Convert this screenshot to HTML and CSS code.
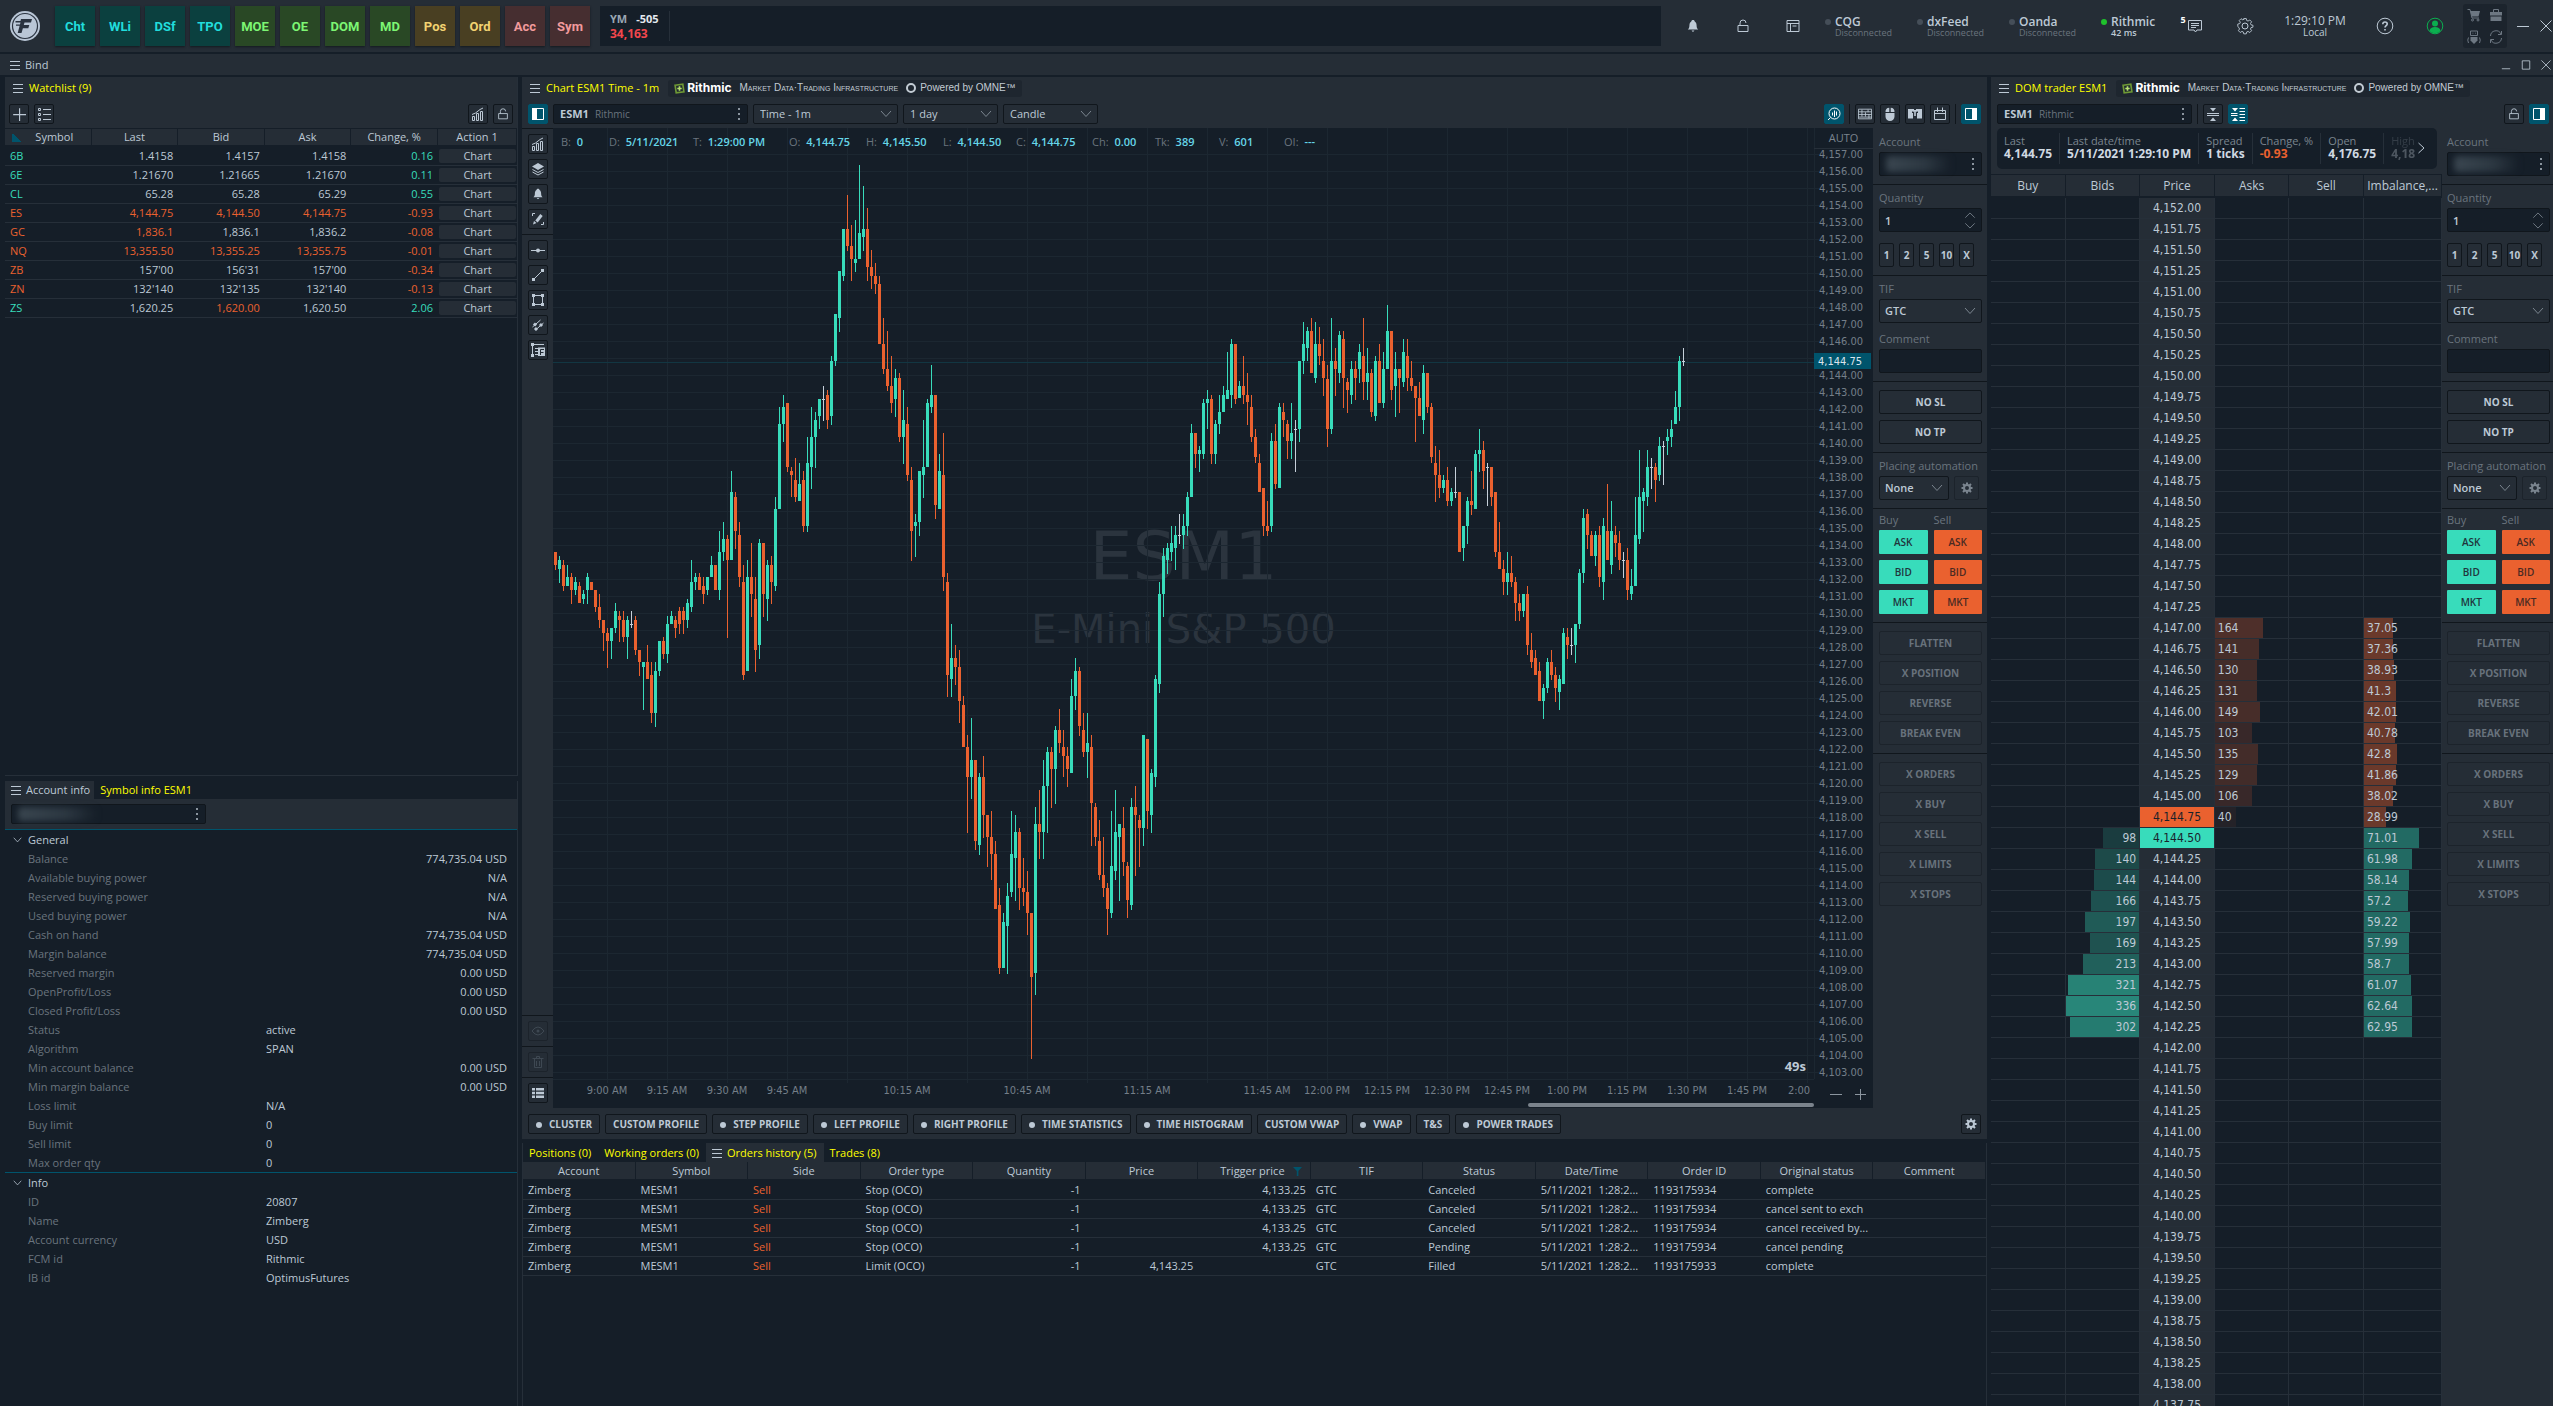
FILE: index.html
```html
<!DOCTYPE html>
<html lang="en">
<head>
  <meta charset="UTF-8">
  <title>Trading workspace</title>
  <meta name="viewport" content="width=device-width, initial-scale=1.0">
  <link rel="stylesheet" href="styles.css">
</head>
<body>
  <!-- icon sprite -->
  <svg class="sprite" aria-hidden="true">
    <symbol id="i-menu" viewBox="0 0 10 10"><path d="M0 1.500h10M0 5.500h10M0 9.500h10"/></symbol>
    <symbol id="i-bell" viewBox="0 0 16 16"><path class="fill" d="M8 2c1 0 1.600.600 1.700 1.400 1.300.700 1.900 2.200 1.900 4.200 0 2 .500 3 1.600 4H2.800c1.100-1 1.600-2 1.600-4 0-2 .600-3.500 1.900-4.200C6.400 2.600 7 2 8 2zM6.500 12.500h3L8 14z"/></symbol>
    <symbol id="i-lock" viewBox="0 0 16 16"><path d="M3 7.500h10v6H3zM5 7.500V5a3 3 0 0 1 6 0"/></symbol>
    <symbol id="i-window" viewBox="0 0 16 16"><path d="M2 2.500h12v11H2zM2 5.500h12M5.500 5.500v8M7.500 8h4"/></symbol>
    <symbol id="i-chat" viewBox="0 0 16 16"><path d="M1.500 2.500h13v9.500H10l-1.500 2L7 12H1.500zM4 5.500h8M4 7.500h8M4 9.500h5"/></symbol>
    <symbol id="i-gear" viewBox="0 0 18 18"><path d="M7.600 1.500h2.800l.5 2.200 1.500.600 1.900-1.200 2 2-1.200 1.900.6 1.500 2.200.500v0l-.100 2.100-2.100.500-.600 1.500 1.200 1.900-2 2-1.900-1.200-1.500.600-.500 2.100H7.600l-.5-2.100-1.500-.600-1.900 1.200-2-2 1.200-1.900-.600-1.500L1 10.400V7.600l2.200-.5.600-1.500-1.200-1.900 2-2 1.900 1.200 1.500-.600z" transform="translate(.9 .2) scale(.9)"/><circle cx="9" cy="9" r="3"/></symbol>
    <symbol id="i-cog" viewBox="0 0 12 12"><circle cx="6" cy="6" r="3"/><path d="M6 .5v2M6 9.500v2M.5 6h2M9.500 6h2M2 2l1.500 1.500M8.500 8.500L10 10M10 2L8.500 3.500M3.500 8.500L2 10"/></symbol>
    <symbol id="i-help" viewBox="0 0 18 18"><circle cx="9" cy="9" r="7.800"/><path d="M6.800 7.200c0-3 4.400-2.800 4.400-.2C11.200 8.700 9 8.700 9 10.600M9 12v1.600" stroke-width="1.600"/></symbol>
    <symbol id="i-user" viewBox="0 0 18 18"><circle cx="9" cy="9" r="7.800"/><circle class="fill" cx="9" cy="6.500" r="3"/><path class="fill" d="M3.500 14c.5-3 2.500-4 5.500-4s5 1 5.500 4c-3 3-8 3-11 0z"/></symbol>
    <symbol id="i-cart" viewBox="0 0 14 14"><path class="fill" d="M3.500 3H13l-1.500 5.500H4.500z"/><path d="M.5 1.500h2.500l2 8.500h7"/><circle cx="5.500" cy="12" r="1"/><circle cx="11" cy="12" r="1"/></symbol>
    <symbol id="i-case" viewBox="0 0 14 14"><path class="fill" d="M1 4h12v3.500H1zM1.500 8.500h11V13h-11z"/><path d="M4.500 4V1.500h5V4"/></symbol>
    <symbol id="i-robot" viewBox="0 0 14 14"><path d="M3.500 1h7v4.500h-7zM1.500 7.500Q0 10 1.500 13M12.500 7.500Q14 10 12.500 13M5.500 3.200h.8M8 3.200h.8"/><path class="fill" d="M3.500 7h7v3.500L7 14l-3.500-3.500z"/></symbol>
    <symbol id="i-sync" viewBox="0 0 14 14"><path d="M1.500 6A5.500 5.500 0 0 1 12 4M12.500 1v3.500H9M12.500 8A5.500 5.500 0 0 1 2 10M1.500 13V9.500H5"/></symbol>
    <symbol id="i-min" viewBox="0 0 12 12"><path d="M0 6.500h12"/></symbol>
    <symbol id="i-low" viewBox="0 0 12 12"><path d="M1 10.500h10"/></symbol>
    <symbol id="i-max" viewBox="0 0 12 12"><path d="M1.500 1h9v10h-9z"/></symbol>
    <symbol id="i-x" viewBox="0 0 12 12"><path d="M.5.500l11 11M11.500.500l-11 11"/></symbol>
    <symbol id="i-plus" viewBox="0 0 12 12"><path d="M1 6.500h11M6.500 1v11"/></symbol>
    <symbol id="i-list" viewBox="0 0 14 14"><path d="M1.500 1.500h2v2h-2zM1.500 6.500h2v2h-2zM1.500 11.500h2v2h-2zM6 2.500h8M6 7.500h8M6 12.500h8"/></symbol>
    <symbol id="i-bars" viewBox="0 0 14 14"><path d="M1.500 13.500V9.500h2v4zM5.500 13.500V6.500h2v7zM9.500 13.500V4.500h2v9z"/><path d="M1 7.500L4.500 6 9 2.500l3-1.500"/></symbol>
    <symbol id="i-sideL" viewBox="0 0 14 14"><path class="fill" d="M1 1h5v12H1z"/><path d="M1.500 1.500h11v11h-11z"/></symbol>
    <symbol id="i-sideR" viewBox="0 0 14 14"><path class="fill" d="M8 1h5v12H8z"/><path d="M1.500 1.500h11v11h-11z"/></symbol>
    <symbol id="i-layers" viewBox="0 0 14 14"><path class="fill" d="M7 1l6 3.500L7 8 1 4.500z"/><path d="M1.500 7.500L7 10.500l5.500-3M1.500 10L7 13l5.500-3"/></symbol>
    <symbol id="i-draw" viewBox="0 0 14 14"><path d="M1.500 4V1.500H4M10 12.500h2.500V10"/><path d="M10.500 3L5.500 9.500" stroke-width="3"/><path class="fill" d="M2 12.500l1-3.500 2.500 2z"/></symbol>
    <symbol id="i-hline" viewBox="0 0 14 14"><path d="M0 7.500h14"/><circle class="fill" cx="7" cy="7.500" r="2"/></symbol>
    <symbol id="i-trend" viewBox="0 0 14 14"><path d="M2.500 11.500l9-9"/><path class="fill" d="M1 10h3v3H1zM10 1h3v3h-3z"/></symbol>
    <symbol id="i-rect" viewBox="0 0 14 14"><path d="M2.500 2.500h9v9h-9z"/><path class="fill" d="M1 1h3v3H1zM10 1h3v3h-3zM1 10h3v3H1zM10 10h3v3h-3z"/></symbol>
    <symbol id="i-channel" viewBox="0 0 14 14"><path d="M1.500 9l8-7M4.500 12l8-7"/><path d="M3 7.500l2-2M9 8l2-2M4 12l2-2" stroke-width="3"/></symbol>
    <symbol id="i-fib" viewBox="0 0 14 14"><path d="M1.500 1v12M3 1.500h10M4 5.500h9M4 8.500h3M4 11.500h3"/><path class="fill" d="M0 0h3v3H0zM0 11h3v3H0zM7 4.500h7V13H7z"/><path d="M9.500 12V6.500H13M9.500 9.500h3" stroke="#252d36"/></symbol>
    <symbol id="i-eye" viewBox="0 0 14 14"><path d="M1 7q6-8 12 0-6 8-12 0z"/><circle class="fill" cx="7" cy="7" r="1.500"/></symbol>
    <symbol id="i-trash" viewBox="0 0 14 14"><path d="M1.500 3.500h11M5.500 3.500v-2h3v2M3.500 3.500v9h7v-9M5.500 6v5M8.500 6v5"/></symbol>
    <symbol id="i-rows" viewBox="0 0 14 14"><path class="fill" d="M1 2h3v2.500H1zM5 2h8v2.500H5zM1 5.800h3v2.500H1zM5 5.800h8v2.500H5zM1 9.600h3v2.500H1zM5 9.600h8v2.500H5z"/></symbol>
    <symbol id="i-scan" viewBox="0 0 14 14"><circle cx="7.500" cy="6.500" r="5.500"/><path d="M3.500 10.500L1 13M5.500 8.500v-3M7.500 10V3.500M9.500 8.500v-4"/></symbol>
    <symbol id="i-grid" viewBox="0 0 16 14"><path d="M.5 1.500h15v11H.5zM.5 4.500h15M.5 7.500h15M.5 10.500h15M4.500 2v8M8.500 5v5M11.500 2v3M12.500 7v5"/></symbol>
    <symbol id="i-mouse" viewBox="0 0 14 14"><path class="fill" d="M2.500 6h9v3.500a4.500 4.500 0 0 1-9 0zM2.500 5A4 4 0 0 1 6.300.800V5zM11.500 5A4 4 0 0 0 7.700.800V5z"/></symbol>
    <symbol id="i-ticks" viewBox="0 0 14 14"><path class="fill" d="M0 2h6v2.500H4V6h1v5.500H0zM14 2H8v2.500h2V6H9v5.500h5z"/><path class="fill" d="M5 3h4v1.500H7.800V9H6.200V4.500H5z"/></symbol>
    <symbol id="i-cal" viewBox="0 0 14 14"><path d="M1.500 3.500h11v9h-11zM1.500 6.500h11M4.500.500V5M9.500.500V5"/></symbol>
    <symbol id="i-center" viewBox="0 0 14 14"><path class="fill" d="M4 1h6L7 4.500zM4 14h6l-3-3.500z"/><path d="M1 6.500h12M1 8.500h12"/></symbol>
    <symbol id="i-centerlist" viewBox="0 0 14 14"><path class="fill" d="M1 1h6L4 4.500zM1 14h6l-3-3.500z"/><path d="M0 6.500h6.500M0 8.500h6.500M8.500 1.500H14M8.500 4.500H14M8.500 7.500H14M8.500 10.500H14M8.500 13.500H14"/></symbol>
    <symbol id="i-down" viewBox="0 0 12 8"><path d="M1 1l5 5.500L11 1"/></symbol>
    <symbol id="i-dots" viewBox="0 0 4 12"><path class="fill" d="M1 0h2v2H1zM1 5h2v2H1zM1 10h2v2H1z"/></symbol>
    <symbol id="i-filter" viewBox="0 0 10 12"><path class="fill" d="M0 1h10L6 5.500V11H4.200V5.500z"/></symbol>
    <symbol id="i-next" viewBox="0 0 8 12"><path d="M1.500 1L7 6l-5.500 5"/></symbol>
  </svg>

  <header class="topbar">
    <svg class="logo" viewBox="0 0 30 30"><circle cx="15" cy="15" r="15" fill="#b9c6d6"/><circle cx="15" cy="15" r="12.500" fill="none" stroke="#2a3340" stroke-width="1.200"/><path d="M11 8h11l-1 3.500h-6.500l-.7 2.500h5.500l-1 3.200h-5.400L11.500 22H7.700l2.800-10.500H5.500V10h5zM6 13.500h4v1.200H6z" fill="#2a3340"/></svg>
    <nav class="launchers">
      <button class="launch teal">Cht</button><button class="launch teal">WLi</button><button class="launch teal">DSf</button><button class="launch teal">TPO</button>
      <button class="launch green">MOE</button><button class="launch green">OE</button><button class="launch green">DOM</button><button class="launch green">MD</button>
      <button class="launch gold">Pos</button><button class="launch gold">Ord</button><button class="launch rose">Acc</button><button class="launch rose">Sym</button>
    </nav>
    <div class="ticker">
      <div class="quote"><div><b class="sym">YM</b><b>-505</b></div><div class="fall">34,163</div></div>
    </div>
    <div class="slot"><svg class="ic16"><use href="#i-bell"/></svg></div>
    <div class="slot"><svg class="ic16"><use href="#i-lock"/></svg></div>
    <div class="slot"><svg class="ic16"><use href="#i-window"/></svg></div>
    <div class="conn"><i></i><div>CQG<small>Disconnected</small></div></div>
    <div class="conn"><i></i><div>dxFeed<small>Disconnected</small></div></div>
    <div class="conn"><i></i><div>Oanda<small>Disconnected</small></div></div>
    <div class="conn on"><i></i><div>Rithmic<small>42 ms</small></div></div>
    <div class="slot chat"><sup>5</sup><svg class="ic16"><use href="#i-chat"/></svg></div>
    <div class="slot"><svg class="ic18"><use href="#i-gear"/></svg></div>
    <div class="clock">1:29:10 PM<small>Local</small></div>
    <div class="slot"><svg class="ic18"><use href="#i-help"/></svg></div>
    <div class="slot user"><svg class="ic18"><use href="#i-user"/></svg></div>
    <div class="quick">
      <svg><use href="#i-cart"/></svg><svg><use href="#i-case"/></svg><svg><use href="#i-robot"/></svg><svg><use href="#i-sync"/></svg>
    </div>
    <button class="winbtn" aria-label="Minimize"><svg><use href="#i-min"/></svg></button>
    <button class="winbtn last" aria-label="Close"><svg><use href="#i-x"/></svg></button>
  </header>

  <div class="bindbar">
    <svg class="menu"><use href="#i-menu"/></svg><span>Bind</span>
    <div class="winctl"><svg><use href="#i-low"/></svg><svg><use href="#i-max"/></svg><svg><use href="#i-x"/></svg></div>
  </div>

  <main class="workspace">
    <div class="left">
      <section class="panel watch">
        <div class="tabs"><svg class="menu"><use href="#i-menu"/></svg><span class="title">Watchlist (9)</span></div>
        <div class="toolbar">
          <button class="tool" aria-label="Add"><svg><use href="#i-plus"/></svg></button>
          <button class="tool" aria-label="Lists"><svg><use href="#i-list"/></svg></button>
          <span class="grow"></span>
          <button class="tool" aria-label="Chart"><svg><use href="#i-bars"/></svg></button>
          <button class="tool" aria-label="Lock"><svg><use href="#i-lock"/></svg></button>
        </div>
        <table class="grid watch-table">
          <thead><tr><th class="sorted">Symbol</th><th>Last</th><th>Bid</th><th>Ask</th><th>Change, %</th><th>Action 1</th></tr></thead>
          <tbody id="watchRows"></tbody>
        </table>
      </section>

      <section class="panel account">
        <div class="subtabs"><span class="tab active plain"><svg class="menu"><use href="#i-menu"/></svg>Account info</span><span class="tab">Symbol info ESM1</span></div>
        <div class="toolbar account-bar"><button class="lookup wide" aria-label="Account"><span class="masked"></span><svg class="dots"><use href="#i-dots"/></svg></button></div>
        <div id="accountInfo"></div>
      </section>
    </div>

    <div class="center">
      <section class="panel chart-panel">
        <div class="tabs">
          <svg class="menu"><use href="#i-menu"/></svg><span class="title">Chart ESM1 Time - 1m</span>
          <span class="banner"><svg viewBox="0 0 10 10"><path d="M1 2l7-1 1 7-7 1z" fill="none" stroke="#6f9a35" stroke-width="1.500"/><path d="M3 5h4M5 3v4" stroke="#b6e070" stroke-width="1.500"/></svg><b>Rithmic</b><em>Market Data·Trading Infrastructure</em><i></i><span>Powered by OMNE™</span></span>
        </div>
        <div class="toolbar">
          <button class="tool on" aria-label="Tools panel"><svg><use href="#i-sideL"/></svg></button>
          <button class="lookup sym"><b>ESM1</b> <small>Rithmic</small><svg class="dots"><use href="#i-dots"/></svg></button>
          <label class="select w145"><select aria-label="Aggregation"><option>Time - 1m</option></select><svg><use href="#i-down"/></svg></label>
          <label class="select w95"><select aria-label="Range"><option>1 day</option></select><svg><use href="#i-down"/></svg></label>
          <label class="select w95"><select aria-label="Style"><option>Candle</option></select><svg><use href="#i-down"/></svg></label>
          <span class="grow"></span>
          <button class="tool on" aria-label="Analyze"><svg><use href="#i-scan"/></svg></button>
          <span class="sep"></span>
          <button class="tool" aria-label="Table"><svg><use href="#i-grid"/></svg></button>
          <button class="tool" aria-label="Mouse trading"><svg><use href="#i-mouse"/></svg></button>
          <button class="tool" aria-label="Ticket"><svg><use href="#i-ticks"/></svg></button>
          <button class="tool" aria-label="Calendar"><svg><use href="#i-cal"/></svg></button>
          <span class="sep"></span>
          <button class="tool on" aria-label="Order entry"><svg><use href="#i-sideR"/></svg></button>
        </div>
        <div class="chart-body">
          <div class="strip">
            <div class="strip-group">
              <button class="tool" aria-label="Indicators"><svg><use href="#i-bars"/></svg></button>
              <button class="tool" aria-label="Overlays"><svg><use href="#i-layers"/></svg></button>
              <button class="tool" aria-label="Alerts"><svg><use href="#i-bell"/></svg></button>
              <button class="tool" aria-label="Drawings"><svg><use href="#i-draw"/></svg></button>
            </div>
            <div class="strip-group">
              <button class="tool" aria-label="Horizontal line"><svg><use href="#i-hline"/></svg></button>
              <button class="tool" aria-label="Trend line"><svg><use href="#i-trend"/></svg></button>
              <button class="tool" aria-label="Rectangle"><svg><use href="#i-rect"/></svg></button>
              <button class="tool" aria-label="Channel"><svg><use href="#i-channel"/></svg></button>
              <button class="tool" aria-label="Fibonacci"><svg><use href="#i-fib"/></svg></button>
            </div>
            <span class="grow"></span>
            <div class="strip-group single"><button class="tool" disabled aria-label="Hide"><svg><use href="#i-eye"/></svg></button></div>
            <div class="strip-group single"><button class="tool" disabled aria-label="Delete"><svg><use href="#i-trash"/></svg></button></div>
            <div class="strip-group single"><button class="tool" aria-label="Objects"><svg><use href="#i-rows"/></svg></button></div>
          </div>
          <div class="chart">
            <div class="watermark"><div class="wm-symbol">ESM1</div><div class="wm-name">E-Mini S&amp;P 500</div></div>
            <svg id="plot" class="plot"></svg>
            <div class="ohlc">
              <span>B: <b>0</b></span><span>D: <b>5/11/2021</b></span><span>T: <b>1:29:00 PM</b></span><span>O: <b>4,144.75</b></span><span>H: <b>4,145.50</b></span><span>L: <b>4,144.50</b></span><span>C: <b>4,144.75</b></span><span>Ch: <b>0.00</b></span><span>Tk: <b>389</b></span><span>V: <b>601</b></span><span>OI: <b>---</b></span>
            </div>
            <button class="auto">AUTO</button>
            <span class="countdown">49s</span>
            <div class="scroll"></div>
            <div class="zoom"><button aria-label="Zoom out"><svg><use href="#i-min"/></svg></button><button aria-label="Zoom in"><svg><use href="#i-plus"/></svg></button></div>
          </div>
          <aside class="order-panel"></aside>
        </div>
        <div class="studies">
          <button class="dot">CLUSTER</button><button>CUSTOM PROFILE</button><button class="dot">STEP PROFILE</button><button class="dot">LEFT PROFILE</button><button class="dot">RIGHT PROFILE</button><button class="dot">TIME STATISTICS</button><button class="dot">TIME HISTOGRAM</button><button>CUSTOM VWAP</button><button class="dot">VWAP</button><button>T&amp;S</button><button class="dot">POWER TRADES</button>
          <span class="grow"></span>
          <button class="tool" aria-label="Settings"><svg><use href="#i-cog"/></svg></button>
        </div>
      </section>

      <section class="panel orders">
        <div class="subtabs"><span class="tab">Positions (0)</span><span class="tab">Working orders (0)</span><span class="tab active"><svg class="menu"><use href="#i-menu"/></svg>Orders history (5)</span><span class="tab">Trades (8)</span></div>
        <table class="grid orders-table">
          <thead><tr><th>Account</th><th>Symbol</th><th>Side</th><th>Order type</th><th>Quantity</th><th>Price</th><th class="filtered">Trigger price<svg><use href="#i-filter"/></svg></th><th>TIF</th><th>Status</th><th>Date/Time</th><th>Order ID</th><th>Original status</th><th>Comment</th></tr></thead>
          <tbody id="orderRows"></tbody>
        </table>
      </section>
    </div>

    <section class="panel dom">
      <div class="tabs">
        <svg class="menu"><use href="#i-menu"/></svg><span class="title">DOM trader ESM1</span>
        <span class="banner"><svg viewBox="0 0 10 10"><path d="M1 2l7-1 1 7-7 1z" fill="none" stroke="#6f9a35" stroke-width="1.500"/><path d="M3 5h4M5 3v4" stroke="#b6e070" stroke-width="1.500"/></svg><b>Rithmic</b><em>Market Data·Trading Infrastructure</em><i></i><span>Powered by OMNE™</span></span>
      </div>
      <div class="toolbar">
        <button class="lookup sym"><b>ESM1</b> <small>Rithmic</small><svg class="dots"><use href="#i-dots"/></svg></button>
        <span class="sep"></span>
        <button class="tool" aria-label="Center"><svg><use href="#i-center"/></svg></button>
        <button class="tool on" aria-label="Auto center"><svg><use href="#i-centerlist"/></svg></button>
        <span class="grow"></span>
        <button class="tool" aria-label="Lock"><svg><use href="#i-lock"/></svg></button>
        <button class="tool on" aria-label="Order entry"><svg><use href="#i-sideR"/></svg></button>
      </div>
      <div class="dom-body">
        <div class="ladder">
          <div class="summary-wrap">
            <div class="summary">
              <div>Last<b>4,144.75</b></div><div>Last date/time<b>5/11/2021 1:29:10 PM</b></div><div>Spread<b>1 ticks</b></div><div>Change, %<b class="down">-0.93</b></div><div>Open<b>4,176.75</b></div><div class="faded">High<b>4,18</b></div>
              <svg class="next"><use href="#i-next"/></svg>
            </div>
          </div>
          <table class="grid dom-table">
            <thead><tr><th>Buy</th><th>Bids</th><th>Price</th><th>Asks</th><th>Sell</th><th>Imbalance,...</th></tr></thead>
            <tbody id="domRows"></tbody>
          </table>
        </div>
        <aside class="order-panel narrow"></aside>
      </div>
    </section>
  </main>

  <template id="orderPanel">
    <div class="block"><div class="caption">Account</div><button class="lookup" aria-label="Account"><span class="masked"></span><svg class="dots"><use href="#i-dots"/></svg></button></div>
    <div class="block">
      <label><span class="caption">Quantity</span><span class="spin"><input type="text" value="1"><svg viewBox="0 0 12 18"><path d="M1 6l5-5 5 5M1 12l5 5 5-5"/></svg></span></label>
      <div class="presets"><button>1</button><button>2</button><button>5</button><button>10</button><button>X</button></div>
    </div>
    <div class="block">
      <label><span class="caption">TIF</span><span class="select"><select><option>GTC</option></select><svg><use href="#i-down"/></svg></span></label>
      <label class="next-field"><span class="caption">Comment</span><input type="text"></label>
    </div>
    <div class="block stack"><button class="wide-btn">NO SL</button><button class="wide-btn">NO TP</button></div>
    <div class="block">
      <div class="caption">Placing automation</div>
      <div class="automation"><span class="select"><select aria-label="Placing automation"><option>None</option></select><svg><use href="#i-down"/></svg></span><button class="cog" aria-label="Settings"><svg><use href="#i-cog"/></svg></button></div>
    </div>
    <div class="block sides">
      <div class="caption">Buy</div><div class="caption">Sell</div>
      <button class="buy">ASK</button><button class="sell">ASK</button>
      <button class="buy">BID</button><button class="sell">BID</button>
      <button class="buy">MKT</button><button class="sell">MKT</button>
    </div>
    <div class="block stack"><button class="wide-btn" disabled>FLATTEN</button><button class="wide-btn" disabled>X POSITION</button><button class="wide-btn" disabled>REVERSE</button><button class="wide-btn" disabled>BREAK EVEN</button></div>
    <div class="block stack"><button class="wide-btn" disabled>X ORDERS</button><button class="wide-btn" disabled>X BUY</button><button class="wide-btn" disabled>X SELL</button><button class="wide-btn" disabled>X LIMITS</button><button class="wide-btn" disabled>X STOPS</button></div>
  </template>

  <script src="app.js"></script>
</body>
</html>
```

FILE: styles.css
```css
* {
  box-sizing: border-box;
  margin: 0;
  padding: 0;
}

:root {
  --bg: #151e28;
  --panel: #252d36;
  --edge: #10161c;
  --line: #262f39;
  --text: #bdc9d5;
  --muted: #6a747e;
  --teal: #38dcbb;
  --orange: #ea612f;
  --accent: #00546c;
}

body {
  display: flex;
  flex-direction: column;
  gap: 2px;
  height: 100vh;
  overflow: hidden;
  background: var(--bg);
  color: var(--text);
  font-family: "Open Sans", sans-serif;
  font-size: 11px;
  line-height: 16px;
}

button, input, select {
  font: inherit;
  color: inherit;
  background: none;
  border: none;
}

svg {
  fill: none;
  stroke: currentColor;
}

svg .fill {
  fill: currentColor;
  stroke: none;
}

.sprite {
  position: absolute;
  width: 0;
  height: 0;
}

.grow {
  flex: 1;
}

/* top bar */
.topbar {
  display: flex;
  align-items: center;
  height: 52px;
  background: var(--panel);
}

.logo {
  width: 30px;
  height: 30px;
  margin: 0 15px 0 10px;
  stroke: none;
}

.launchers {
  display: flex;
  gap: 5px;
}

.launch {
  width: 40px;
  height: 40px;
  font: bold 13px "Liberation Sans Narrow", "Roboto", sans-serif;
  box-shadow: 0 1px 2px #141a20;
}

.launch.teal { background: #0b403f; color: #21dcdc; }
.launch.green { background: #294825; color: #7cf573; }
.launch.gold { background: #493f22; color: #f2d271; }
.launch.rose { background: #462e30; color: #f29a9c; }

.ticker {
  flex: 1;
  height: 40px;
  margin: 0 7px 0 10px;
  padding: 5px 0;
  background: var(--bg);
}

.quote {
  width: 70px;
  height: 30px;
  padding-left: 10px;
  border-right: 1px solid var(--line);
  line-height: 15px;
}

.quote b { color: #e3e8ee; }
.quote .sym { margin-right: 9px; color: #9aa6b2; }
.quote .fall { color: #f2474d; font-weight: bold; font-size: 12px; }

.slot {
  display: flex;
  justify-content: center;
  width: 50px;
}

.ic16 { width: 16px; height: 16px; }
.ic18 { width: 18px; height: 18px; }
.user { color: #0bae4f; }

.chat sup {
  margin: -6px 1px 0 -7px;
  font-size: 9px;
  font-weight: bold;
  color: #fff;
}

.conn {
  display: flex;
  gap: 4px;
  width: 92px;
  padding-left: 7px;
  font-size: 12px;
  font-weight: 600;
  line-height: 13px;
}

.conn.on { width: 76px; }

.conn i {
  width: 6px;
  height: 6px;
  margin-top: 4px;
  border-radius: 50%;
  background: #454e58;
}

.conn.on i { background: #1fc12c; }

.conn small {
  display: block;
  font-size: 9px;
  font-weight: normal;
  line-height: 10px;
  color: var(--muted);
}

.conn.on small { color: var(--text); font-weight: 600; }

.clock {
  width: 90px;
  text-align: center;
  font-size: 12px;
  line-height: 13px;
}

.clock small { display: block; font-size: 10px; line-height: 11px; }

.quick {
  display: grid;
  grid-template-columns: 14px 14px;
  justify-content: space-between;
  align-content: space-between;
  width: 44px;
  height: 44px;
  margin-left: 3px;
  padding: 4px;
  border-radius: 3px;
  background: #1c242d;
  color: #6d7782;
}

.quick svg { width: 14px; height: 14px; }

.winbtn {
  display: flex;
  justify-content: center;
  width: 32px;
}

.winbtn svg { width: 12px; height: 12px; }
.winbtn.last { width: 14px; }

.bindbar {
  display: flex;
  align-items: center;
  gap: 5px;
  height: 21px;
  padding: 0 2px 0 10px;
  background: var(--panel);
}

.winctl {
  display: flex;
  gap: 10px;
  margin-left: auto;
}

.winctl svg { width: 10px; height: 10px; }

.menu { width: 10px; height: 10px; flex: none; }

/* workspace */
.workspace {
  flex: 1;
  min-height: 0;
  display: grid;
  grid-template-columns: 513px minmax(0, 1fr) 562px;
  grid-template-rows: minmax(0, 1fr);
  gap: 4px;
  padding-left: 5px;
}

.left, .center {
  display: flex;
  flex-direction: column;
  min-height: 0;
  gap: 4px;
}

.panel {
  display: flex;
  flex-direction: column;
  min-height: 0;
  overflow: hidden;
}

.left { gap: 5px; }
.watch { flex: 699; border-bottom: 1px solid var(--line); border-right: 1px solid var(--line); }
.account { flex: 625; border-right: 1px solid var(--line); }
.chart-panel { flex: 1; }
.orders { height: 263px; border: 1px solid var(--line); border-width: 0 1px; }

.tabs {
  flex: none;
  display: flex;
  align-items: center;
  gap: 6px;
  height: 22px;
  padding-left: 8px;
  background: var(--panel);
}

.title { color: #ffff00; }

.subtabs {
  flex: none;
  display: flex;
  height: 18px;
}

.orders .subtabs { height: 19px; }

.tab {
  display: flex;
  align-items: center;
  gap: 5px;
  padding: 0 7px 0 6px;
  color: #ffff00;
}

.tab .menu { color: var(--text); }
.tab.active { background: var(--panel); }
.tab.plain { padding: 0 4px 0 6px; color: var(--text); }

.toolbar {
  flex: none;
  display: flex;
  align-items: center;
  gap: 5px;
  height: 29px;
  padding: 0 6px;
  background: var(--panel);
}

.watch .toolbar { padding: 0 4px; }
.dom .toolbar { padding: 0 4px 0 6px; }

.tool {
  display: flex;
  flex: none;
  align-items: center;
  justify-content: center;
  width: 20px;
  height: 20px;
  border: 1px solid var(--edge);
  border-radius: 2px;
  color: var(--text);
}

.tool svg { width: 14px; height: 14px; }
.tool.on { background: var(--accent); border-color: var(--accent); color: #fff; }
.tool:disabled { color: #3e4852; border-color: #1c232b; }

.sep {
  width: 1px;
  height: 20px;
  background: var(--edge);
}

.lookup {
  position: relative;
  display: flex;
  align-items: center;
  gap: 6px;
  height: 20px;
  padding: 0 6px;
  text-align: left;
  background: var(--bg);
  border: 1px solid var(--edge);
  border-radius: 2px;
}

.lookup.wide { width: 195px; }
.lookup.sym { width: 195px; }
.lookup small { font-size: 10px; color: var(--muted); }
.lookup .dots { width: 4px; height: 12px; margin-left: auto; color: #8a949e; }

.masked {
  width: 80px;
  height: 14px;
  border-radius: 4px;
  background: linear-gradient(90deg, #3a4650, #2c3741 60%, transparent);
  filter: blur(3px);
}

.select {
  position: relative;
  display: flex;
  align-items: center;
  height: 20px;
  border: 1px solid var(--edge);
  border-radius: 2px;
}

.select select {
  appearance: none;
  width: 100%;
  height: 100%;
  padding: 0 6px;
}

.select svg {
  position: absolute;
  right: 5px;
  width: 12px;
  height: 8px;
  color: #7b858f;
  pointer-events: none;
}

.w145 { width: 145px; }
.w95 { width: 95px; }

.banner {
  display: flex;
  align-items: center;
  height: 17px;
  margin-left: 3px;
  padding: 0 6px;
  border-radius: 3px;
  background: #1e262f;
  color: #c3ccd4;
  font-family: "Liberation Sans", sans-serif;
  font-size: 10px;
}

.banner svg { width: 11px; height: 11px; margin-right: 2px; }
.banner b { margin-right: 8px; color: #fff; font-family: "Inter", sans-serif; font-size: 12px; }
.banner em { font-style: normal; font-variant: small-caps; }
.banner i { width: 10px; height: 10px; margin: 0 4px 0 8px; border: 2px solid #c3ccd4; border-radius: 50%; }
.banner span { font-size: 10px; }

/* tables */
.grid {
  width: 100%;
  table-layout: fixed;
  border-collapse: separate;
  border-spacing: 0;
}

.grid th, .grid td {
  height: 19px;
  padding: 0 5px;
  overflow: hidden;
  white-space: nowrap;
  border-bottom: 1px solid var(--line);
}

.grid th {
  font-weight: normal;
  background: var(--panel);
  border-right: 1px solid var(--bg);
  border-bottom: 2px solid var(--bg);
}

.num { text-align: right; }
.up { color: var(--teal); }
.down { color: var(--orange); }

.watch-table th {
  border-top: 1px solid var(--bg);
}

.watch-table th:last-child { width: 79px; }
.watch-table td:last-child { padding: 0 1px; }
.watch-table .sorted { padding-left: 18px; }

.sorted {
  background: linear-gradient(45deg, var(--accent) 50%, transparent 50%) 7px 5px / 11px 8px no-repeat, var(--panel) !important;
}

.row-action {
  display: block;
  width: 100%;
  height: 14px;
  line-height: 14px;
  border-radius: 2px;
  background: var(--panel);
}

.orders-table td { text-overflow: ellipsis; white-space: pre; }
.filtered svg { width: 9px; height: 11px; margin: 0 -14px -2px 8px; color: var(--accent); }

/* account */
.account-bar { height: 30px; }

.info-group {
  border-top: 1px solid var(--accent);
}

.info-group h3, .info-row {
  display: flex;
  align-items: center;
  height: 19px;
  padding: 0 10px 0 23px;
  font-size: 11px;
  font-weight: normal;
}

.info-group h3 {
  gap: 6px;
  padding-left: 8px;
}

.info-group h3 svg { width: 9px; height: 6px; }
.info-row dt { width: 238px; color: var(--muted); }
.info-row .num { flex: 1; }

/* chart */
.chart-body {
  flex: 1;
  min-height: 0;
  display: flex;
}

.strip {
  display: flex;
  flex-direction: column;
  width: 31px;
  background: var(--panel);
}

.strip-group {
  display: flex;
  flex-direction: column;
  align-items: center;
  gap: 5px;
  padding: 5px 0;
  border-top: 1px solid var(--edge);
}

.strip-group.single { height: 31px; }

.chart {
  position: relative;
  flex: 1;
  min-width: 0;
  overflow: hidden;
}

.plot {
  position: absolute;
  inset: 0;
  width: 100%;
  height: 100%;
  stroke: none;
  font: 11px "DejaVu Sans Condensed", "DejaVu Sans", sans-serif;
}

.plot text { fill: #747e88; }
.plot .gridline { fill: #1c2731; }
.plot .g { fill: var(--teal); }
.plot .r { fill: var(--orange); }
.plot .w { fill: #c6d0da; }
.plot .last-line { fill: #123642; }
.plot .last-tag { fill: var(--accent); }
.plot .last-text { fill: #dbe4ec; }

.watermark {
  display: flex;
  flex-direction: column;
  align-items: center;
  justify-content: center;
  height: 926px;
  padding-right: 59px;
  color: #2b343e;
  font-family: "DejaVu Sans", sans-serif;
}

.wm-symbol { font-size: 68px; line-height: 75px; }
.wm-name { font-size: 40px; line-height: 70px; }

.ohlc {
  position: absolute;
  top: 6px;
  left: 8px;
  display: grid;
  grid-template-columns: 48px 84px 96px 77px 77px 73px 76px 63px 64px 65px auto;
  color: var(--muted);
}

.ohlc b { margin-left: 3px; color: #66d6e8; font-weight: 600; }

.auto {
  position: absolute;
  top: 0;
  right: 0;
  width: 59px;
  height: 21px;
  border-bottom: 1px solid var(--line);
  color: #7b858f;
}

.countdown {
  position: absolute;
  right: 67px;
  bottom: 34px;
  font-size: 13px;
  font-weight: bold;
}

.scroll {
  position: absolute;
  right: 59px;
  bottom: 1px;
  width: 286px;
  height: 4px;
  border-radius: 2px;
  background: #7b838c;
}

.zoom {
  position: absolute;
  right: 7px;
  bottom: 8px;
  display: flex;
  gap: 12px;
}

.zoom svg { display: block; width: 12px; height: 12px; color: #8b959f; }

.studies {
  flex: none;
  display: flex;
  align-items: center;
  gap: 5px;
  height: 31px;
  padding: 0 6px;
  background: var(--panel);
}

.studies button {
  height: 20px;
  padding: 0 7px;
  border: 1px solid var(--edge);
  border-radius: 2px;
  font-size: 10px;
  font-weight: bold;
}

.studies .dot::before {
  content: "";
  display: inline-block;
  width: 6px;
  height: 6px;
  margin-right: 7px;
  border-radius: 50%;
  background: var(--text);
}

.studies .tool { padding: 0; }
.studies .tool svg { width: 12px; height: 12px; stroke-width: 2; }

/* dom */
.dom-body {
  flex: 1;
  min-height: 0;
  display: flex;
}

.ladder {
  flex: 1;
  min-width: 0;
  background: var(--bg);
}

.summary-wrap {
  padding: 0 5px 5px 6px;
  background: var(--panel);
}

.summary {
  position: relative;
  display: flex;
  height: 41px;
  padding: 5px 0;
  border-radius: 5px;
  overflow: hidden;
  background: var(--bg);
}

.summary div {
  padding: 1px 7px 0;
  border-right: 1px solid var(--line);
  line-height: 13px;
  white-space: nowrap;
  color: #7b858f;
}

.summary b { display: block; color: #d0d9e2; font-size: 12px; }
.summary b.down { color: var(--orange); }
.summary .faded { border: none; opacity: 0.3; }
.summary .next { position: absolute; right: 12px; top: 14px; width: 8px; height: 12px; }

.dom-table {
  border-top: 1px solid var(--bg);
  font-size: 12px;
}

.dom-table th { height: 23px; padding: 0; }
.dom-table th:last-child { width: 78px; }

.dom-table td {
  height: 21px;
  padding: 0;
  border-right: 1px solid var(--line);
  font-family: "DejaVu Sans Condensed", "Open Sans", sans-serif;
}

.dom-table .price { text-align: center; background: var(--panel); }
.dom-table .best-ask { background: var(--orange); color: #1a222b; }
.dom-table .best-bid { background: var(--teal); color: #1a222b; }

.bar {
  height: 20px;
  padding: 0 3px;
  line-height: 20px;
  background: rgba(234, 97, 47, 0.4);
}

.bar.buyers { background: rgba(56, 220, 187, 0.4); }
.bid .bar { margin-left: auto; text-align: right; }

/* order entry */
.order-panel {
  flex: none;
  width: 114px;
  background: var(--panel);
}

.order-panel.narrow { width: 111px; }
.block { padding: 5px 5px 8px 6px; border-bottom: 1px solid var(--edge); }
.block:first-child { padding-top: 6px; }
.block:last-child { border: none; }
.narrow .block { padding-left: 5px; padding-right: 3px; }

.caption {
  display: block;
  margin-bottom: 2px;
  color: var(--muted);
}

.order-panel .lookup, .order-panel .select { width: 100%; height: 24px; }
.order-panel .masked { width: 66px; height: 16px; }

.order-panel input {
  display: block;
  width: 100%;
  height: 24px;
  padding: 0 5px;
  font-weight: 600;
  background: var(--bg);
  border: 1px solid var(--edge);
  border-radius: 2px;
}

.order-panel .select select { padding: 0 5px; font-weight: 600; }

.spin { position: relative; display: block; }
.spin svg { position: absolute; right: 6px; top: 4px; width: 12px; height: 17px; color: #727c86; }

.presets { display: flex; gap: 5px; margin-top: 11px; }

.presets button {
  width: 15px;
  height: 24px;
  border: 1px solid var(--edge);
  border-radius: 2px;
  font-size: 10px;
  font-weight: bold;
}

.next-field { display: block; margin-top: 8px; }

.stack {
  display: flex;
  flex-direction: column;
  gap: 6px;
  padding-top: 8px;
}

.wide-btn {
  height: 24px;
  border: 1px solid var(--edge);
  border-radius: 2px;
  font-size: 10px;
  font-weight: bold;
}

.wide-btn:disabled { color: #68727c; border-color: #1c232b; }

.automation { display: flex; gap: 5px; }
.order-panel .automation .select { width: 70px; }

.cog {
  display: flex;
  align-items: center;
  justify-content: center;
  width: 25px;
  height: 24px;
  border: 1px solid #1c232b;
  border-radius: 2px;
  color: #7b858f;
}

.cog svg { width: 12px; height: 12px; stroke-width: 2; }

.sides {
  display: grid;
  grid-template-columns: 1fr 1fr;
  gap: 6px;
  padding-top: 3px;
}

.sides .caption { margin: 0 0 -4px; }

.sides button {
  height: 24px;
  border-radius: 1px;
  font-size: 10px;
  font-weight: 600;
}

.sides .buy { background: var(--teal); color: #20343b; }
.sides .sell { background: var(--orange); color: #4a2a22; }
```

FILE: app.js
```js
// watchlist: symbol, last, bid, ask, change, red columns
const watch = [
  ['6B', '1.4158', '1.4157', '1.4158', '0.16', ''],
  ['6E', '1.21670', '1.21665', '1.21670', '0.11', ''],
  ['CL', '65.28', '65.28', '65.29', '0.55', ''],
  ['ES', '4,144.75', '4,144.50', '4,144.75', '-0.93', 'lba'],
  ['GC', '1,836.1', '1,836.1', '1,836.2', '-0.08', 'l'],
  ['NQ', '13,355.50', '13,355.25', '13,355.75', '-0.01', 'lba'],
  ['ZB', "157'00", "156'31", "157'00", '-0.34', ''],
  ['ZN', "132'140", "132'135", "132'140", '-0.13', ''],
  ['ZS', '1,620.25', '1,620.00', '1,620.50', '2.06', 'b']
];

document.getElementById('watchRows').innerHTML = watch.map(([sym, last, bid, ask, chg, red]) => {
  const dir = chg.startsWith('-') ? 'down' : 'up';
  const cell = (v, key) => `<td class="num ${red.includes(key) ? 'down' : ''}">${v}</td>`;
  return `<tr><td class="${dir}">${sym}</td>${cell(last, 'l')}${cell(bid, 'b')}${cell(ask, 'a')}
    <td class="num ${dir}">${chg}</td><td><button class="row-action">Chart</button></td></tr>`;
}).join('');

// account info, money values are right aligned
const account = {
  General: [
    ['Balance', '774,735.04 USD', 1], ['Available buying power', 'N/A', 1], ['Reserved buying power', 'N/A', 1],
    ['Used buying power', 'N/A', 1], ['Cash on hand', '774,735.04 USD', 1], ['Margin balance', '774,735.04 USD', 1],
    ['Reserved margin', '0.00 USD', 1], ['OpenProfit/Loss', '0.00 USD', 1], ['Closed Profit/Loss', '0.00 USD', 1],
    ['Status', 'active'], ['Algorithm', 'SPAN'], ['Min account balance', '0.00 USD', 1], ['Min margin balance', '0.00 USD', 1],
    ['Loss limit', 'N/A'], ['Buy limit', '0'], ['Sell limit', '0'], ['Max order qty', '0']
  ],
  Info: [['ID', '20807'], ['Name', 'Zimberg'], ['Account currency', 'USD'], ['FCM id', 'Rithmic'], ['IB id', 'OptimusFutures']]
};

document.getElementById('accountInfo').innerHTML = Object.entries(account).map(([name, rows]) =>
  `<section class="info-group"><h3><svg><use href="#i-down"/></svg>${name}</h3><dl>` +
  rows.map(([k, v, right]) => `<div class="info-row"><dt>${k}</dt><dd class="${right ? 'num' : ''}">${v}</dd></div>`).join('') +
  '</dl></section>').join('');

// orders history
const orders = [
  ['Stop (OCO)', '', '4,133.25', 'Canceled', '1193175934', 'complete'],
  ['Stop (OCO)', '', '4,133.25', 'Canceled', '1193175934', 'cancel sent to exch'],
  ['Stop (OCO)', '', '4,133.25', 'Canceled', '1193175934', 'cancel received by...'],
  ['Stop (OCO)', '', '4,133.25', 'Pending', '1193175934', 'cancel pending'],
  ['Limit (OCO)', '4,143.25', '', 'Filled', '1193175933', 'complete']
];

document.getElementById('orderRows').innerHTML = orders.map(([type, price, trigger, status, id, original]) =>
  `<tr><td>Zimberg</td><td>MESM1</td><td class="down">Sell</td><td>${type}</td><td class="num">-1</td>` +
  `<td class="num">${price}</td><td class="num">${trigger}</td><td>GTC</td><td>${status}</td>` +
  `<td>5/11/2021  1:28:2...</td><td>${id}</td><td>${original}</td><td></td></tr>`).join('');

// order entry is shared by the chart and the DOM
document.querySelectorAll('.order-panel').forEach(el => {
  el.appendChild(document.getElementById('orderPanel').content.cloneNode(true));
});

const money = v => v.toLocaleString('en-US', { minimumFractionDigits: 2 });

// DOM ladder
const asks = { 4147: [164, 37.05], 4146.75: [141, 37.36], 4146.5: [130, 38.93], 4146.25: [131, 41.3], 4146: [149, 42.01],
  4145.75: [103, 40.78], 4145.5: [135, 42.8], 4145.25: [129, 41.86], 4145: [106, 38.02], 4144.75: [40, 28.99] };
const bids = { 4144.5: [98, 71.01], 4144.25: [140, 61.98], 4144: [144, 58.14], 4143.75: [166, 57.2], 4143.5: [197, 59.22],
  4143.25: [169, 57.99], 4143: [213, 58.7], 4142.75: [321, 61.07], 4142.5: [336, 62.64], 4142.25: [302, 62.95] };
const maxSize = 336;

function sizeBar(size, rgb) {
  const width = Math.round(Math.pow(size / maxSize, 0.58) * 100);
  const alpha = (size / maxSize * 0.55).toFixed(2);
  return `<div class="bar" style="width:${width}%;background:rgba(${rgb},${alpha})">${size}</div>`;
}

let ladder = '';
for (let p = 4152; p >= 4137.75; p -= 0.25) {
  const a = asks[p], b = bids[p];
  const level = a || b;
  const best = p === 4144.75 ? 'best-ask' : p === 4144.5 ? 'best-bid' : '';
  ladder += `<tr><td></td><td class="bid">${b ? sizeBar(b[0], '56,220,187') : ''}</td>
    <td class="price ${best}">${money(p)}</td><td>${a ? sizeBar(a[0], '234,97,47') : ''}</td><td></td>
    <td>${level ? `<div class="bar ${b ? 'buyers' : ''}" style="width:${level[1]}%">${level[1]}</div>` : ''}</td></tr>`;
}
document.getElementById('domRows').innerHTML = ladder;

// candles, one per minute: direction, then high, body top, body bottom, low
const series = [
  { top: 12, scale: 1.7043, bars: `
r702,702,724,733 g709,716,731,755 r716,724,760,769 g724,745,760,760 r738,745,767,791 g745,753,767,775 r753,760,789,789 g767,774,782,791 g738,745,767,791 r753,753,767,767
r767,767,796,804 r774,796,818,832 r818,818,840,871 r832,840,854,900 g832,832,854,885 g789,803,832,840 r803,811,818,856 r803,818,847,856 g811,818,847,885 w803,825,827,832
r811,818,869,878 r869,869,890,914 g890,890,898,971 r861,890,919,919 r890,912,977,994 g890,905,977,1000 g854,854,905,914 r847,854,876,885 g811,825,876,891 g803,811,825,825
r811,818,832,849 r796,803,825,842 r796,803,818,842 g782,789,818,832 g716,753,796,804 g738,745,753,767 r738,745,767,767 r745,760,774,791 g745,745,767,775 g709,724,745,745
r724,724,767,767 g666,702,767,784 g651,680,702,718 r673,680,716,849 g564,600,716,716 r600,608,666,697 r651,673,745,762 r724,753,912,920 g716,745,905,905 r687,745,774,813
r745,782,869,907 g680,687,861,885 r687,687,774,813 g716,724,782,820 r709,724,753,791 g608,629,760,769 g455,484,629,629 g435,455,484,515 r448,448,557,566 r557,564,571,609
r542,579,608,617 g550,586,615,615 r564,579,658,668 g506,550,658,668 g455,506,557,595 g463,477,506,559 g441,441,470,493 w419,441,443,479 r426,435,477,493 g368,377,470,486
g297,297,377,385 g223,223,303,327 g152,152,232,240 r94,152,181,189 r145,181,203,240 g136,203,210,225 g43,159,203,203 g78,152,165,189 r116,152,216,240 r187,216,232,254
r210,232,245,262 r232,245,348,348 r303,348,390,399 r326,390,419,428 r368,419,448,465 g390,406,441,472 r397,406,506,515 g426,477,506,552 r455,484,571,581 r557,579,666,718
g637,651,658,711 g564,564,651,675 g477,557,571,610 g441,448,557,557 g383,435,455,465 r435,435,622,646 g535,564,629,629 r499,571,745,769 r738,753,912,949 g825,883,919,949
r861,883,898,929 r869,898,956,994 r948,963,1035,1035 r1014,1035,1086,1181 g985,1057,1086,1123 r1057,1057,1195,1210 g1079,1086,1202,1219 r1050,1086,1150,1190 r1150,1150,1188,1239 r1144,1188,1217,1261
r1195,1217,1311,1311 r1275,1304,1411,1421 g1318,1333,1411,1411 g1266,1288,1340,1421 g1144,1217,1282,1290 g1150,1179,1224,1297 r1173,1179,1275,1312 r1224,1275,1282,1306 r1246,1282,1317,1355 r1317,1317,1427,1566
g1137,1166,1420,1457 r1108,1166,1179,1225 g1057,1101,1179,1225 g1035,1043,1101,1181 r1035,1043,1072,1139 g999,1006,1072,1132 r970,1006,1028,1045 r1006,1035,1050,1086 r1035,1050,1072,1103 g919,948,1079,1079
g883,905,948,971 r898,905,999,1016 r977,1006,1043,1052 g977,1028,1043,1088 r1014,1035,1130,1203 r1130,1137,1188,1203 r1159,1195,1253,1261 r1188,1253,1275,1290 r1266,1275,1311,1355 g1144,1237,1317,1326
g1108,1179,1246,1261 g1166,1166,1188,1297 r1137,1173,1231,1254 r1231,1237,1295,1326 g1121,1137,1304,1312 r1101,1137,1150,1254 r1150,1159,1173,1239 g1014,1014,1173,1203 r1021,1021,1144,1174 g1072,1079,1150,1181
g912,919,1086,1103 g753,774,927,943 g695,709,774,813 g687,695,716,740 g658,687,702,718 g658,673,695,733 w637,673,675,689 g637,658,673,697 g600,608,658,675 g484,499,608,608
r499,499,535,559 g522,528,535,566 g441,448,535,544 g426,441,448,493 r435,441,535,552 g477,484,535,552 g435,464,484,501 g419,435,464,464 g361,426,441,441 g339,348,435,457
r348,348,441,450` },
  { top: 112, scale: 2.0103, bars: `
g284,293,318,318 r233,293,312,330 r267,312,326,372 r312,336,396,406 r380,396,437,449 r430,448,507,507 r499,499,575,595 r525,575,585,595 g388,404,575,587
r370,404,491,501 g328,336,499,499 r328,346,362,396 r362,370,404,440 g328,388,404,440 w362,380,382,466 g243,243,380,406 g165,209,243,269 g175,183,217,243 r157,183,267,267
g165,209,277,287 r175,209,233,251 r199,243,277,313 r251,279,380,416 g157,243,380,390 r217,243,259,313 g183,191,267,287 r183,199,277,338 r277,285,302,348 g243,259,311,330
r243,259,277,321 g209,225,259,287 r157,233,285,321 g217,267,285,321 r259,267,346,356 g233,243,354,364 r209,243,328,328 g225,259,328,338 g131,183,259,259 r183,183,302,321
g225,259,293,356 r259,259,277,348 g199,225,285,295 r199,233,277,303 r243,277,293,303 r293,293,318,406 r285,318,354,354 g251,267,362,390 r267,267,336,348 r328,336,437,449
r414,448,472,527 r422,472,499,519 g472,482,499,509 r456,482,525,535 g499,507,525,535 w456,507,509,519 r507,507,627,627 g575,575,619,645 g517,525,575,612 r464,525,533,553
g422,430,541,541 g380,422,430,466 r404,422,464,501 w448,456,458,535 r456,456,517,535 r507,507,627,637 r567,627,661,661 r643,661,688,714 g627,669,688,714 r635,669,688,698
r677,688,730,766 r712,730,746,766 g712,712,746,758 r696,712,814,834 r790,824,848,860 r824,840,874,874 r848,866,927,927 g893,901,927,963 g840,848,901,911 r824,848,874,885
r858,874,901,929 g874,883,909,945 g780,790,893,893 r780,798,814,842 w780,814,816,834 g772,772,814,850 g661,669,772,782 g541,559,669,690 r541,551,593,621 r585,593,635,635
g585,593,635,655 r575,593,677,698 g559,575,688,724 r491,585,643,643 g525,585,653,671 r575,593,609,637 r585,609,643,663 w627,643,645,679 r619,643,704,724 g661,696,712,724
g517,593,696,696 g422,517,601,611 g499,507,525,587 g422,456,517,535 w438,456,458,501 r448,456,482,527 g396,414,472,484 w404,414,416,493 g380,396,404,432 g362,380,396,416
g303,336,370,370 g233,243,336,364 w217,243,245,253` }
];

const times = ['9:00 AM', '9:15 AM', '9:30 AM', '9:45 AM', '', '10:15 AM', '', '10:45 AM', '', '11:15 AM', '', '11:45 AM',
  '12:00 PM', '12:15 PM', '12:30 PM', '12:45 PM', '1:00 PM', '1:15 PM', '1:30 PM', '1:45 PM', '2:00'];

function drawChart() {
  const svg = document.getElementById('plot');
  const w = svg.clientWidth, h = svg.clientHeight;
  const right = w - 59, bottom = h - 29;
  const step = 4;                    // px per minute
  const lastX = right - 131;         // 1:29 PM candle
  const priceY = p => Math.round(25.5 + (4157 - p) * 17);
  const rect = (x, y, rw, rh, cls) => `<rect x="${x}" y="${y}" width="${rw}" height="${rh}" class="${cls}"/>`;
  let out = '';

  for (let p = 4157; p >= 4103; p--) {
    out += rect(0, priceY(p), right + 5, 1, 'gridline');
    if (p !== 4145) out += `<text x="${right + 5}" y="${priceY(p) + 4}">${money(p)}</text>`;
  }
  times.forEach((t, i) => {
    const x = lastX - 269 * step + i * 60;
    out += rect(x, 0, 1, bottom + 4, 'gridline');
    out += `<text x="${t === '2:00' ? x - 8 : x}" y="${bottom + 15}" text-anchor="middle">${t}</text>`;
  });
  out += rect(0, bottom, right, 1, 'gridline') + rect(right, 0, 1, bottom, 'gridline');
  out += rect(0, priceY(4144.75), right, 1, 'last-line');

  let x = lastX - 282 * step;
  series.forEach(({ top, scale, bars }) => {
    bars.trim().split(/\s+/).forEach(bar => {
      const [high, bodyTop, bodyBottom, low] = bar.slice(1).split(',').map(v => Math.round(top + v / scale));
      out += rect(x, high, 1, low - high, bar[0]);
      out += rect(x - 1, bodyTop, 3, Math.max(1, bodyBottom - bodyTop), bar[0]);
      x += step;
    });
  });

  const tagY = priceY(4144.75) - 9;
  out += rect(right, tagY, 57, 16, 'last-tag');
  out += `<text x="${right + 4}" y="${tagY + 12}" class="last-text">4,144.75</text>`;
  svg.innerHTML = out;
}

drawChart();
window.onresize = drawChart;
```
